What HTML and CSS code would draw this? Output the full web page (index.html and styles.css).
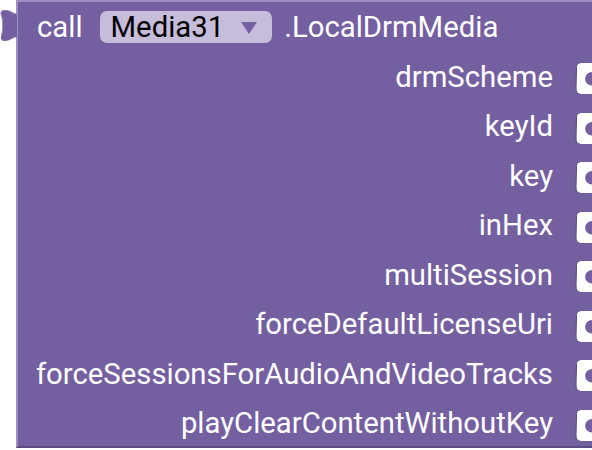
FILE: index.html
```html
<!DOCTYPE html>
<html>
<head>
<meta charset="utf-8">
<link rel="stylesheet" href="styles.css">
</head>
<body>
<div class="canvas">
  <div class="block">
    <svg class="out-tab" width="17" height="31" viewBox="0 0 17 31">
      <path d="M17,4 C13,4 10,0 5,0 C1.5,0 0,2 1.5,6 C3,10 3,21 1.5,25 C0,29 1.5,31 5,31 C10,31 13,27 17,27 Z" fill="#745fa0"/>
      <path d="M17,4 C13,4 10,0 5,0 C1.5,0 0,2 1.5,6 C3,10 3,21 1.5,25" fill="none" stroke="#9d8ec3" stroke-width="1"/>
    </svg>
    <div class="head">
      <span class="lbl">call</span>
      <span class="dd"><span class="dd-text">Media31</span><svg class="tri" width="16" height="12" viewBox="0 0 16 12"><path d="M0,0 H16 L8,12 Z" fill="#7560a2"/></svg></span>
      <span class="lbl">.LocalDrmMedia</span>
    </div>
    <div class="arg"><span class="lbl">drmScheme</span><svg class="sock" width="17" height="31" viewBox="0 0 17 31"><path d="M17,0 H5 Q1,0 1.5,6 L1,25 Q1,31 5,31 H17 V22.5 C8,22 8,9.5 17,9 Z" fill="#fff"/><path d="M5,0 Q1,0 1.5,6 L1,25 Q1,31 5,31" fill="none" stroke="#5a4a80" stroke-width="1"/></svg></div>
    <div class="arg"><span class="lbl">keyId</span><svg class="sock" width="17" height="31" viewBox="0 0 17 31"><path d="M17,0 H5 Q1,0 1.5,6 L1,25 Q1,31 5,31 H17 V22.5 C8,22 8,9.5 17,9 Z" fill="#fff"/><path d="M5,0 Q1,0 1.5,6 L1,25 Q1,31 5,31" fill="none" stroke="#5a4a80" stroke-width="1"/></svg></div>
    <div class="arg"><span class="lbl">key</span><svg class="sock" width="17" height="31" viewBox="0 0 17 31"><path d="M17,0 H5 Q1,0 1.5,6 L1,25 Q1,31 5,31 H17 V22.5 C8,22 8,9.5 17,9 Z" fill="#fff"/><path d="M5,0 Q1,0 1.5,6 L1,25 Q1,31 5,31" fill="none" stroke="#5a4a80" stroke-width="1"/></svg></div>
    <div class="arg"><span class="lbl">inHex</span><svg class="sock" width="17" height="31" viewBox="0 0 17 31"><path d="M17,0 H5 Q1,0 1.5,6 L1,25 Q1,31 5,31 H17 V22.5 C8,22 8,9.5 17,9 Z" fill="#fff"/><path d="M5,0 Q1,0 1.5,6 L1,25 Q1,31 5,31" fill="none" stroke="#5a4a80" stroke-width="1"/></svg></div>
    <div class="arg"><span class="lbl">multiSession</span><svg class="sock" width="17" height="31" viewBox="0 0 17 31"><path d="M17,0 H5 Q1,0 1.5,6 L1,25 Q1,31 5,31 H17 V22.5 C8,22 8,9.5 17,9 Z" fill="#fff"/><path d="M5,0 Q1,0 1.5,6 L1,25 Q1,31 5,31" fill="none" stroke="#5a4a80" stroke-width="1"/></svg></div>
    <div class="arg"><span class="lbl">forceDefaultLicenseUri</span><svg class="sock" width="17" height="31" viewBox="0 0 17 31"><path d="M17,0 H5 Q1,0 1.5,6 L1,25 Q1,31 5,31 H17 V22.5 C8,22 8,9.5 17,9 Z" fill="#fff"/><path d="M5,0 Q1,0 1.5,6 L1,25 Q1,31 5,31" fill="none" stroke="#5a4a80" stroke-width="1"/></svg></div>
    <div class="arg"><span class="lbl">forceSessionsForAudioAndVideoTracks</span><svg class="sock" width="17" height="31" viewBox="0 0 17 31"><path d="M17,0 H5 Q1,0 1.5,6 L1,25 Q1,31 5,31 H17 V22.5 C8,22 8,9.5 17,9 Z" fill="#fff"/><path d="M5,0 Q1,0 1.5,6 L1,25 Q1,31 5,31" fill="none" stroke="#5a4a80" stroke-width="1"/></svg></div>
    <div class="arg"><span class="lbl">playClearContentWithoutKey</span><svg class="sock" width="17" height="31" viewBox="0 0 17 31"><path d="M17,0 H5 Q1,0 1.5,6 L1,25 Q1,31 5,31 H17 V22.5 C8,22 8,9.5 17,9 Z" fill="#fff"/><path d="M5,0 Q1,0 1.5,6 L1,25 Q1,31 5,31" fill="none" stroke="#5a4a80" stroke-width="1"/></svg></div>
  </div>
</div>
</body>
</html>
```

FILE: styles.css
```css
html, body {
  margin: 0;
  padding: 0;
  background: #ffffff;
}
.canvas {
  width: 592px;
  height: 450px;
  padding-left: 16px;
  box-sizing: border-box;
  overflow: hidden;
}
.block {
  position: relative;
  width: 576px;
  height: 448px;
  background: #745fa0;
  border-top: 2px solid #9d8ec3;
  border-left: 2px solid #9d8ec3;
  border-bottom: 2px solid #5a4a80;
  box-sizing: border-box;
  font-family: Roboto, "Noto Sans", sans-serif;
  font-size: 29.3px;
  color: #ffffff;
}
.lbl {
  white-space: nowrap;
}
.out-tab {
  position: absolute;
  left: -18px;
  top: 8px;
  display: block;
}
.head {
  height: 50px;
  display: flex;
  align-items: center;
  padding-left: 19px;
}
.dd {
  display: flex;
  align-items: center;
  height: 32px;
  margin-left: 17px;
  margin-right: 12px;
  padding: 0 15px 0 11px;
  background: #c6bddb;
  border-radius: 7px;
  color: #000000;
}
.dd-text {
  line-height: 32px;
}
.tri {
  display: block;
  margin-left: 17px;
  margin-top: 2px;
}
.arg {
  height: 49.5px;
  display: flex;
  align-items: center;
  justify-content: flex-end;
}
.arg .lbl {
  margin-right: 22px;
}
.sock {
  display: block;
  flex-shrink: 0;
  margin-top: 4px;
}
```
